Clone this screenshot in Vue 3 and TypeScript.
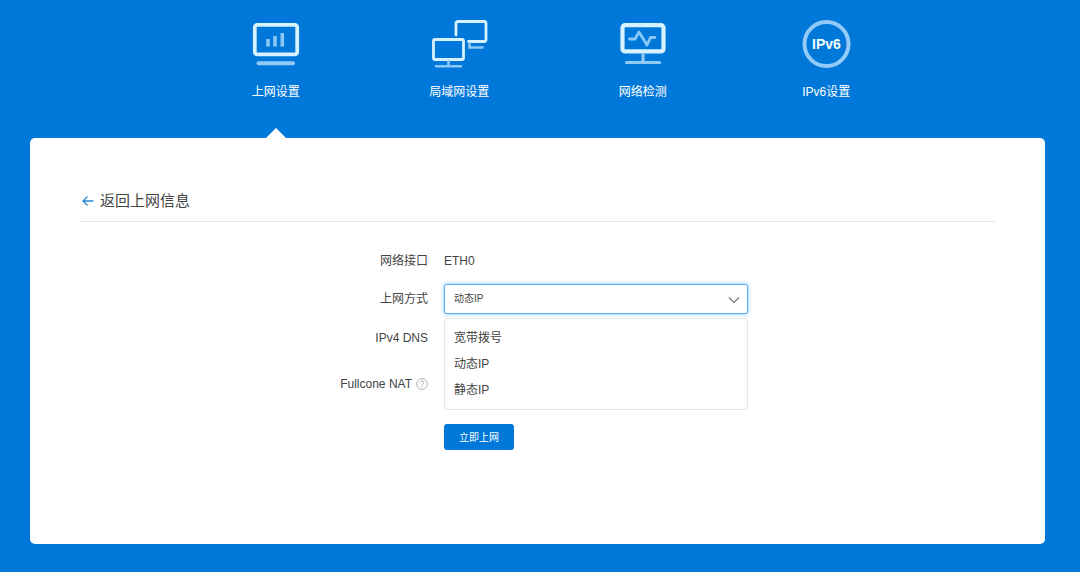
<script setup lang="ts">
import { ref } from 'vue'

const tabs = [
  { id: 'wan', label: '上网设置' },
  { id: 'lan', label: '局域网设置' },
  { id: 'check', label: '网络检测' },
  { id: 'ipv6', label: 'IPv6设置' },
]
const modes = ['宽带拨号', '动态IP', '静态IP']

const activeTab = ref('wan')
const mode = ref('动态IP')
const listOpen = ref(true)

function choose(value: string) {
  mode.value = value
  listOpen.value = false
}
</script>

<template>
  <div class="page">
    <nav class="tabs">
      <a
        v-for="tab in tabs"
        :key="tab.id"
        :href="'#' + tab.id"
        class="tab"
        :class="{ active: activeTab === tab.id }"
        @click.prevent="activeTab = tab.id"
      >
        <svg v-if="tab.id === 'wan'" class="tab-icon" viewBox="0 0 60 48" fill="none" aria-hidden="true">
          <rect x="8.8" y="4.8" width="42.4" height="29.6" rx="2.5" stroke="#d8f2ff" stroke-width="3.8" />
          <path d="M22 19v7.500M29 16v10.500M36.300 13v13.500" stroke="#8cc8f6" stroke-width="3.6" />
          <path d="M12.500 43.200h34.500" stroke="#92cbf8" stroke-width="4" stroke-linecap="round" />
        </svg>
        <svg v-else-if="tab.id === 'lan'" class="tab-icon" viewBox="0 0 60 48" fill="none" aria-hidden="true">
          <rect x="4.5" y="19.5" width="30" height="20" rx="1.5" stroke="#d8f2ff" stroke-width="2.800" />
          <path d="M27 15V3.500q0-2 2-2h26q2 0 2 2v16q0 2-2 2H39.500" stroke="#d8f2ff" stroke-width="2.800" stroke-linecap="round" />
          <path d="M40.500 23v4.500h13M19.500 41v4.500M7 46.200h25" stroke="#8cc8f6" stroke-width="2.600" stroke-linecap="round" />
        </svg>
        <svg v-else-if="tab.id === 'check'" class="tab-icon" viewBox="0 0 60 48" fill="none" aria-hidden="true">
          <rect x="9.500" y="5.200" width="41" height="26.200" rx="2.500" stroke="#d8f2ff" stroke-width="4.200" />
          <path d="M16.500 19h5.500l4-7 8 13 3.500-7.500h4.500" stroke="#8cc8f6" stroke-width="2.800" stroke-linecap="round" stroke-linejoin="round" />
          <path d="M30 34v8M13.500 42.500h33" stroke="#92cbf8" stroke-width="3.200" stroke-linecap="round" />
        </svg>
        <svg v-else class="tab-icon" viewBox="0 0 60 48" fill="none" aria-hidden="true">
          <circle cx="30.500" cy="24" r="22" stroke="#92cbf8" stroke-width="4" />
          <text class="ipv6-text" x="30.500" y="29" text-anchor="middle">IPv6</text>
        </svg>
        <span>{{ tab.label }}</span>
      </a>
    </nav>

    <main class="card">
      <h1 class="heading">
        <a class="back" href="#status">
          <svg class="back-icon" viewBox="0 0 12 12" fill="none" aria-hidden="true">
            <path d="M11.500 6H1M5.500 1.500 1 6l4.500 4.500" stroke="#2b86d9" stroke-width="1.300" />
          </svg>
          返回上网信息
        </a>
      </h1>

      <form class="form" @submit.prevent>
        <span class="label">网络接口</span>
        <span class="value">ETH0</span>

        <label class="label" for="mode">上网方式</label>
        <div class="select-box">
          <select id="mode" v-model="mode" class="select" @mousedown.prevent="listOpen = !listOpen">
            <option v-for="item in modes" :key="item" :value="item">{{ item }}</option>
          </select>
          <svg class="chevron" viewBox="0 0 12 8" fill="none" aria-hidden="true">
            <path d="M1 1.500l5 5 5-5" stroke="#707780" stroke-width="1.200" />
          </svg>
          <ul v-if="listOpen" class="options" role="listbox" aria-label="上网方式">
            <li
              v-for="item in modes"
              :key="item"
              class="option"
              role="option"
              :aria-selected="item === mode"
              @click="choose(item)"
            >
              {{ item }}
            </li>
          </ul>
        </div>

        <span class="label">IPv4 DNS</span>
        <span class="value"></span>

        <span class="label">
          Fullcone NAT
          <svg class="help" viewBox="0 0 12 12" fill="none" aria-hidden="true">
            <circle cx="6" cy="6" r="5.400" stroke="#b2b2b2" stroke-width="1" />
            <path d="M4.300 4.700c0-2.300 3.500-2.200 3.500-.1C7.800 5.900 6.100 5.800 6.100 7.300M6.100 8.300v1.100" stroke="#a6a6a6" stroke-width="1" />
          </svg>
        </span>
        <span class="value"></span>

        <button class="submit" type="submit">立即上网</button>
      </form>
    </main>
  </div>
</template>

<style>
html,
body {
  background: #0078d9;
}
body {
  margin: 0;
}
</style>

<style scoped>
.page {
  box-sizing: border-box;
  min-height: 100vh;
  display: flex;
  flex-direction: column;
  padding: 20px 35px 28px 30px;
  background: #0078d9;
  color: #444;
  font-family: "Liberation Sans", "Noto Sans CJK SC", sans-serif;
  font-size: 12px;
  line-height: 18px;
}
.tabs {
  display: grid;
  grid-template-columns: repeat(4, 1fr);
  padding: 0 127px 0 154px;
}
.tab {
  display: flex;
  flex-direction: column;
  align-items: center;
  height: 118px;
  color: #fff;
  text-decoration: none;
}
.tab span {
  margin-top: 15px;
}
.tab.active::after {
  content: "";
  margin-top: auto;
  border: 10px solid transparent;
  border-top: 0;
  border-bottom-color: #fff;
}
.tab-icon {
  width: 60px;
  height: 48px;
}
.ipv6-text {
  fill: #f0fbff;
  font-family: "Liberation Sans", sans-serif;
  font-size: 14px;
  font-weight: 700;
}
.card {
  flex: 1;
  padding: 48px 50px 0;
  border-radius: 5px;
  background: #fff;
}
.heading {
  margin: 0;
  padding: 2px 2px 8px;
  border-bottom: 1px solid #e4e4e4;
  font-size: 15px;
  font-weight: 400;
  line-height: 25px;
}
.back {
  display: flex;
  align-items: center;
  gap: 6px;
  color: #444;
  text-decoration: none;
}
.back-icon {
  width: 12px;
  height: 12px;
}
.form {
  display: grid;
  grid-template-columns: 348fr 551fr;
  grid-template-rows: 38px 38px 40px 52px;
  column-gap: 16px;
  align-items: center;
  padding-top: 20px;
}
.label {
  display: flex;
  align-items: center;
  justify-content: flex-end;
  gap: 4px;
}
.help {
  width: 12px;
  height: 12px;
}
.select-box {
  position: relative;
  width: 304px;
}
.select {
  display: block;
  width: 100%;
  height: 30px;
  padding: 0 32px 1px 9px;
  border: 1px solid #5aaaf0;
  border-radius: 3px;
  outline: none;
  appearance: none;
  background: #fff;
  box-shadow: 0 0 4px #7cc0fa;
  color: #444;
  font-family: inherit;
  font-size: 10px;
}
.chevron {
  position: absolute;
  top: 12px;
  right: 8px;
  width: 12px;
  height: 8px;
  pointer-events: none;
}
.options {
  position: absolute;
  z-index: 1;
  top: 34px;
  left: 0;
  right: 0;
  margin: 0;
  padding: 6px 0;
  border: 1px solid #e6e6e6;
  border-radius: 3px;
  background: #fff;
  list-style: none;
}
.option {
  padding: 0 9px;
  line-height: 26px;
  cursor: pointer;
}
.submit {
  grid-column: 2;
  justify-self: start;
  width: 70px;
  height: 26px;
  margin-top: 14px;
  padding: 0 0 2px;
  border: 0;
  border-radius: 3px;
  background: #0078d9;
  color: #fff;
  font-family: inherit;
  font-size: 10px;
}
</style>
